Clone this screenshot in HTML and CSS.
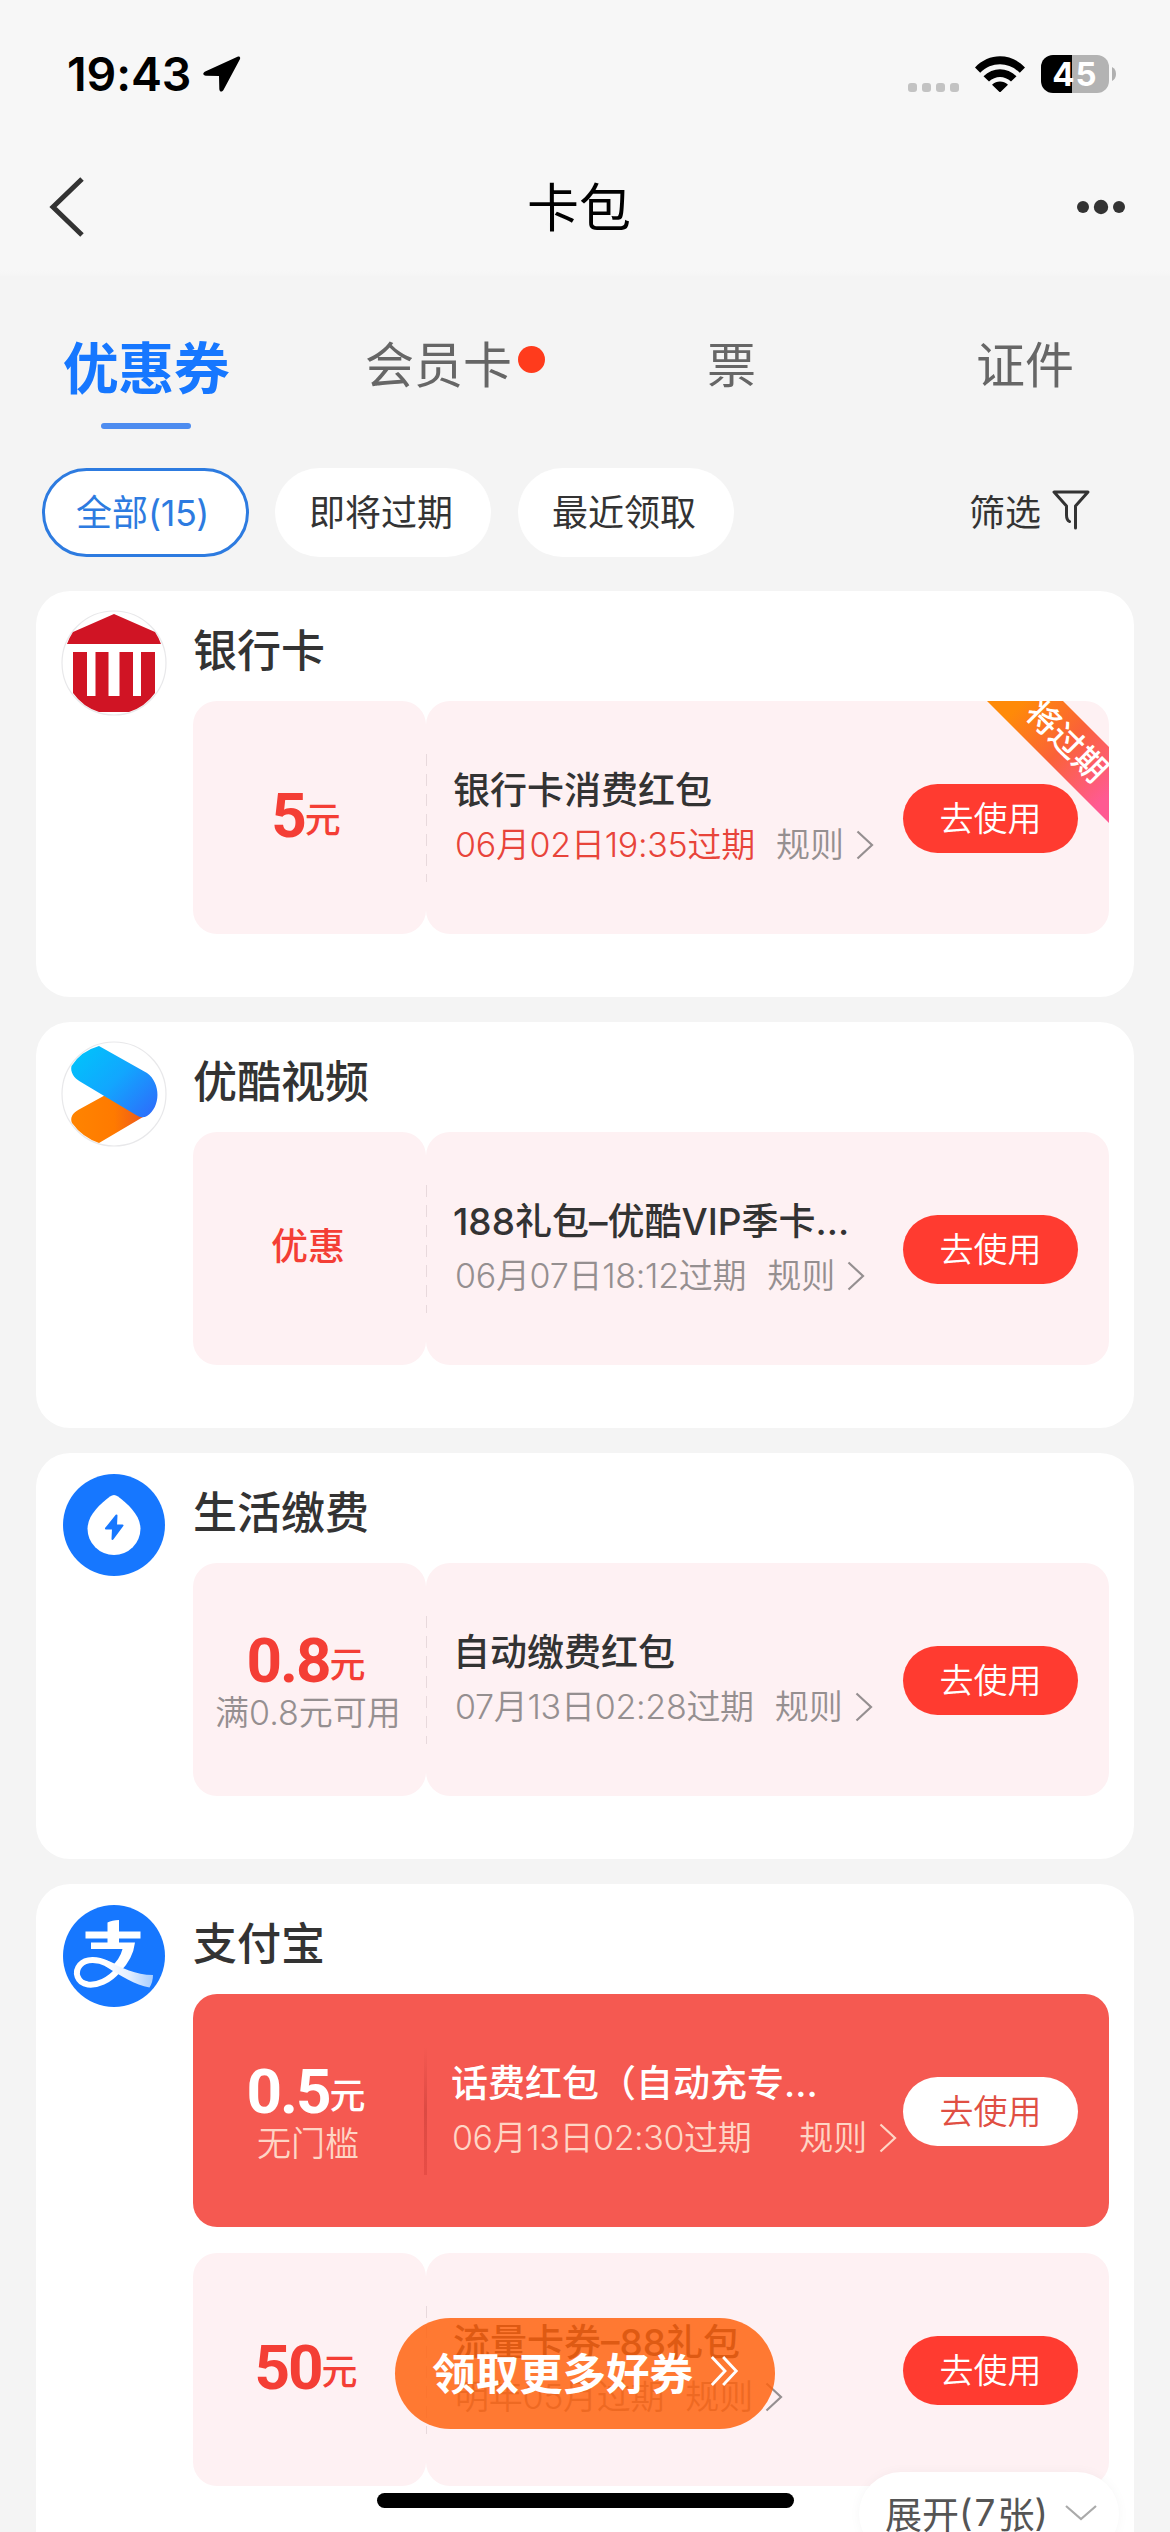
FILE: index.html
```html
<!DOCTYPE html>
<html lang="zh-CN">
<head>
<meta charset="utf-8">
<title>卡包</title>
<link rel="stylesheet" href="styles.css">
</head>
<body>
<svg width="0" height="0" class="defs">
  <defs>
    <symbol id="arrow" viewBox="0 0 18 30"><path d="M1.5 1.5 16 15 1.5 28.5" fill="none" stroke="currentColor" stroke-width="2.2"/></symbol>
    <linearGradient id="ykBlue" x1="0" y1="0.1" x2="1" y2="0.9"><stop offset="0" stop-color="#00c4fb"/><stop offset=".5" stop-color="#12a6fe"/><stop offset="1" stop-color="#2d6dfb"/></linearGradient>
    <linearGradient id="ykOrange" x1="0" y1="0" x2="1" y2="0"><stop offset="0" stop-color="#ff8400"/><stop offset=".6" stop-color="#ff7a00"/><stop offset="1" stop-color="#ee5a1c"/></linearGradient>
    <linearGradient id="zfTail" x1="0" y1="0" x2="1" y2="0"><stop offset="0" stop-color="#fff"/><stop offset=".5" stop-color="#e3efff"/><stop offset="1" stop-color="#a5ccff"/></linearGradient>
  </defs>
</svg>

<header class="top">
  <div class="status">
    <span class="time">19:43</span>
    <svg class="loc" width="38" height="36" viewBox="0 0 38 36"><path d="M34.5.8 2.2 15.4C-.7 17-.2 19.6 3 19.7L16 19.9 16.3 33c.1 3 3 3.5 4.3.8L36.9 3.3C37.800 1.200 36.400 0 34.500.8z"/></svg>
    <span class="signal"><i></i><i></i><i></i><i></i></span>
    <svg class="wifi" width="50" height="36" viewBox="0 0 50 36"><path d="M0 11.500C14-3.500 36-3.500 50 11.500L44.800 16.800C33.500 5.500 16.500 5.500 5.200 16.800zM8.500 20.200C18 11 32 11 41.500 20.200L36 25.600C29.500 19.500 20.500 19.500 14 25.600zM17 28.700C21.800 24.500 28.200 24.500 33 28.700L25 36.500z"/></svg>
    <span class="battery">45</span>
    <svg class="nub" width="4" height="14" viewBox="0 0 4 14"><path d="M0 0Q4 2 4 7T0 14z" fill="#b0b0b0"/></svg>
  </div>
  <nav class="nav">
    <svg width="36" height="60" viewBox="0 0 36 60"><path d="M33 2 4 30 33 58" fill="none" stroke="#333" stroke-width="5"/></svg>
    <h1>卡包</h1>
    <svg width="50" height="18" viewBox="0 0 50 18" fill="#333"><circle cx="7" cy="9" r="6"/><circle cx="25" cy="9" r="7.200"/><circle cx="43" cy="9" r="6"/></svg>
  </nav>
</header>

<div class="tabs">
  <span class="tab on">优惠券</span>
  <span class="tab t2">会员卡<i class="dot"></i></span>
  <span class="tab t3">票</span>
  <span class="tab t4">证件</span>
</div>

<div class="chips">
  <span class="chip c1">全部<span class="num">(15)</span></span>
  <span class="chip">即将过期</span>
  <span class="chip">最近领取</span>
  <span class="filter">筛选<svg width="38" height="42" viewBox="0 0 38 42" fill="none" stroke="#333" stroke-width="3" stroke-linejoin="round" stroke-linecap="round"><path d="M17.500 32.500Q14.500 31 14.500 26V17L2 3H36L23.500 17V39"/></svg></span>
</div>

<main class="list">
  <section class="card">
    <svg class="logo" width="106" height="106" viewBox="-1 -1 106 106"><circle cx="52" cy="52" r="52" fill="#fff" stroke="#e8e8ea" stroke-width="1.200"/><path d="M52 3 93 21Q97 27 99 33H5Q7 27 11 21zM11 41H25V85H33.500V41H46.500V85H57.500V41H71V85H79V41H93V82Q83 96 67 101H37Q21 96 11 82z" fill="#d01424"/></svg>
    <div class="body">
      <h2>银行卡</h2>
      <div class="coupon">
        <div class="left"><p class="amt"><b>5</b><span>元</span></p></div>
        <div class="right">
          <div class="info"><p class="name">银行卡消费红包</p><p class="meta"><span class="date soon">06月02日19:35过期</span><span class="rule">规则</span><svg class="ar"><use href="#arrow"/></svg></p></div>
          <span class="btn">去使用</span>
        </div>
        <div class="ribbon"><span>将过期</span></div>
      </div>
    </div>
  </section>

  <section class="card">
    <svg class="logo" width="106" height="106" viewBox="-1 -1 106 106"><circle cx="52" cy="52" r="52" fill="#fff" stroke="#e8e8ea" stroke-width="1.200"/><path d="M42.500 53.500 81 75 37 101Q20 95 10 81C8 76 10 71 17 67.500z" fill="url(#ykOrange)"/><path d="M37 4Q19 9 9.500 24C8 30 12 36 18 39.500L74 73Q80 77 85 74C99 65 99 41 85 31z" fill="url(#ykBlue)"/></svg>
    <div class="body">
      <h2>优酷视频</h2>
      <div class="coupon">
        <div class="left"><p class="word">优惠</p></div>
        <div class="right">
          <div class="info"><p class="name">188礼包–优酷VIP季卡...</p><p class="meta"><span class="date">06月07日18:12过期</span><span class="rule">规则</span><svg class="ar"><use href="#arrow"/></svg></p></div>
          <span class="btn">去使用</span>
        </div>
      </div>
    </div>
  </section>

  <section class="card">
    <svg class="logo" width="106" height="106" viewBox="-2 -2 106 106"><circle cx="51" cy="51" r="51" fill="#1677ff"/><path d="M47 22.500Q51 19.500 55 22.500C66 31 77 41 77.500 54.500A26.500 26.500 0 0 1 24.500 54.500C25 41 36 31 47 22.500z" fill="#fff"/><path d="M53.500 41.500 43 54.500H50L49.500 65 59.500 51.500H53z" fill="#1677ff" stroke="#1677ff" stroke-width="2" stroke-linejoin="round"/></svg>
    <div class="body">
      <h2>生活缴费</h2>
      <div class="coupon">
        <div class="left"><p class="amt"><b>0.8</b><span>元</span></p><p class="sub">满0.8元可用</p></div>
        <div class="right">
          <div class="info"><p class="name">自动缴费红包</p><p class="meta"><span class="date">07月13日02:28过期</span><span class="rule">规则</span><svg class="ar"><use href="#arrow"/></svg></p></div>
          <span class="btn">去使用</span>
        </div>
      </div>
    </div>
  </section>

  <section class="card last">
    <svg class="logo" width="106" height="106" viewBox="-2 -2 106 106"><circle cx="51" cy="51" r="51" fill="#1677ff"/><path d="M22.500 26.500H44.500V17.500Q49 15 56 15V26.500H77.500V33.500H56V37.500H72Q70 54 57 67L48 62Q57 54 59.500 44H28V37.500H44.500V33.500H22.500z" fill="#fff"/><path d="M55 65C46 76 34 80.500 25 79.500C14 78 11 67 17 60C23 53 35 54 44 58.500L58 65" fill="none" stroke="#fff" stroke-width="6"/><path d="M42 55C60 63 72 70 90 70Q90 77 86.500 82.500C72 80 58 71 42 61z" fill="url(#zfTail)"/></svg>
    <div class="body">
      <h2>支付宝</h2>
      <div class="coupon red">
        <div class="left"><p class="amt"><b>0.5</b><span>元</span></p><p class="sub">无门槛</p></div>
        <div class="right">
          <div class="info"><p class="name">话费红包（自动充专...</p><p class="meta"><span class="date">06月13日02:30过期</span><span class="rule far">规则</span><svg class="ar"><use href="#arrow"/></svg></p></div>
          <span class="btn">去使用</span>
        </div>
      </div>
      <div class="coupon">
        <div class="left"><p class="amt"><b>50</b><span>元</span></p></div>
        <div class="right">
          <div class="info"><p class="name">流量卡券–88礼包</p><p class="meta"><span class="date">明年05月过期</span><span class="rule">规则</span><svg class="ar"><use href="#arrow"/></svg></p></div>
          <span class="btn">去使用</span>
        </div>
      </div>
    </div>
    <div class="expand">展开<span class="num">(7</span>张<span class="num">)</span><svg width="32" height="18" viewBox="0 0 32 18"><path d="M1 2 16 15 31 2" fill="none" stroke="#aaa" stroke-width="2.200"/></svg></div>
  </section>
</main>

<div class="more">领取更多好券<svg width="30" height="32" viewBox="0 0 32 34" fill="none" stroke="#fff" stroke-width="3"><path d="M2 2 16 17 2 32M14 2 28 17 14 32"/></svg></div>
<div class="home"></div>
</body>
</html>
```
FILE: styles.css
```css
* { box-sizing: border-box; margin: 0; padding: 0; }
html, body { width: 1170px; height: 2532px; overflow: hidden; }
body {
  position: relative;
  background: #f4f4f4;
  color: #333;
  font-family: Inter, "Noto Sans CJK SC", sans-serif;
}
i { font-style: normal; }
svg { display: block; flex: none; }
.defs { position: absolute; }

.top { height: 276px; background: linear-gradient(#f7f7f7 270px, #f5f5f5); }
.status { height: 148px; padding: 0 54px 0 67px; display: flex; align-items: center; }
.time { width: 136px; font-size: 46.500px; font-weight: 600; letter-spacing: -0.1px; color: #000; white-space: nowrap; }
.signal { display: flex; gap: 5px; margin: 26px 16px 0 auto; }
.signal i { width: 9px; height: 9px; border-radius: 3px; background: #c3c3c3; }
.battery {
  width: 68px; height: 38px; margin: 0 3px 0 16px; border-radius: 12px;
  background: linear-gradient(90deg, #000 31px, #b3b3b3 31px);
  color: #fff; font-size: 33px; font-weight: 700; line-height: 38px; text-align: center; letter-spacing: 1px;
}
.nav { height: 118px; padding: 0 44px 0 49px; display: flex; align-items: center; justify-content: space-between; }
.nav h1 { font-size: 52px; font-weight: 400; line-height: 60px; color: #000; margin: 3px 0 0 -3px; }

.tabs { display: flex; height: 192px; padding: 53px 0 0 62px; }
.tab { font-size: 49px; line-height: 74px; color: #666; }
.tab.on {
  width: 168px; font-size: 56px; font-weight: 700; color: #1677ff; line-height: 80px; letter-spacing: -0.5px;
  display: flex; flex-direction: column; align-items: center; white-space: nowrap;
}
.tab.on::after { content: ""; width: 90px; height: 6px; margin-top: 14px; border-radius: 3px; background: #4d8cf0; }
.t2 { display: flex; margin-left: 135px; }
.dot { width: 27px; height: 27px; margin: 17px 0 0 6px; border-radius: 50%; background: #ff3b1c; }
.t3 { margin-left: 162px; }
.t4 { margin-left: 220px; }

.chips { display: flex; gap: 27px; height: 89px; padding-left: 42px; }
.chip {
  width: 216px; height: 89px; padding-right: 4px; border-radius: 45px; background: #fff;
  font-size: 36px; line-height: 91px; text-align: center;
}
.c1 { width: 207px; padding-right: 6px; border: 3px solid #2d7be0; color: #2d7be0; line-height: 84px; margin-right: -1px; }
.c1 .num { font-size: 36px; letter-spacing: -0.5px; }
.filter { display: flex; align-items: center; margin-left: 208px; font-size: 36px; height: 84px; }
.filter svg { margin-left: 11px; }

.list { display: flex; flex-direction: column; gap: 25px; padding: 34px 36px 0; }
.card { position: relative; display: flex; height: 406px; padding: 19px 25px 0; border-radius: 34px; background: #fff; }
.card.last { height: 720px; }
.body { width: 917px; margin-left: 26px; }
h2 { height: 91px; font-size: 44px; font-weight: 500; line-height: 82px; }
.coupon { position: relative; display: flex; height: 233px; margin-bottom: 26px; }
.left, .right { background: #fef1f3; border-radius: 24px; }
.left { width: 233px; padding-right: 3px; display: flex; flex-direction: column; align-items: center; justify-content: center; }
.right { position: relative; flex: 1; display: flex; align-items: center; justify-content: space-between; padding: 2px 31px 0 27px; }
.right::before {
  content: ""; position: absolute; left: 0; top: 53px; width: 1px; height: 128px;
  background: repeating-linear-gradient(#e8d9dc 0 12px, transparent 12px 20px);
}
.amt { display: flex; align-items: baseline; height: 60px; margin: 6px 4px 0 0; color: #f43e35; font-size: 36px; font-weight: 500; line-height: 60px; }
.amt:only-child { margin-top: -4px; }
.amt b { font-family: Roboto, sans-serif; font-size: 62px; font-weight: 700; letter-spacing: -2px; }
.amt span { transform: translateY(-4px); }
.word { margin-bottom: 9px; color: #f43e35; font-size: 37px; font-weight: 500; }
.sub { font-size: 34px; line-height: 44px; color: #958f90; font-weight: 350; white-space: nowrap; }
.info { white-space: nowrap; }
.name { font-size: 37px; font-weight: 500; line-height: 56px; height: 56px; }
.meta { display: flex; align-items: center; height: 56px; font-size: 34px; line-height: 54px; color: #958f90; font-weight: 350; padding-bottom: 3px; }
.date { margin-left: 2px; letter-spacing: -0.28px; }
.soon { color: #e8443a; }
.rule { margin-left: 21px; }
.rule.far { margin-left: 48px; }
.ar { width: 18px; height: 30px; margin-left: 12px; }
.btn {
  flex: none; width: 175px; height: 69px; border-radius: 35px; background: #ff3b30;
  color: #fff; font-size: 34px; font-weight: 350; line-height: 69px; text-align: center;
}
.red { border-radius: 24px; background: #f55951; }
.red .left, .red .right { background: none; }
.red .right { padding-left: 25px; }
.red .right::before { width: 3px; left: -2px; background: linear-gradient(rgba(200,50,45,0), #dc4a43 50%, rgba(200,50,45,0.3)); }
.red .amt, .red .name { color: #fff; }
.red .sub, .red .meta { color: #fed5c5; }
.red .date { margin-left: 1px; letter-spacing: -0.4px; }
.red .btn { background: #fff; color: #e04f43; }

.ribbon {
  position: absolute; top: 0; right: 0; width: 122px; height: 122px;
  clip-path: polygon(0 0, 76px 0, 122px 46px, 122px 122px);
  background: linear-gradient(135deg, #ff8a08 15%, #fa6238 50%, #ff5a92 88%);
}
.ribbon span {
  position: absolute; left: 30px; top: 20px; width: 100px; text-align: center;
  font-size: 33px; line-height: 40px; font-weight: 500; color: #fff; transform: rotate(45deg);
}
.expand {
  position: absolute; right: 15px; top: 588px; width: 260px; height: 84px; border-radius: 43px;
  padding: 0 0 3px 26px; display: flex; align-items: center; background: #fff;
  box-shadow: 0 0 12px rgba(0,0,0,.04); font-size: 37px; color: #555; white-space: nowrap;
}
.expand .num { letter-spacing: 2px; }
.expand svg { margin-left: 15px; }
.more {
  position: absolute; left: 395px; top: 2318px; width: 380px; height: 111px; border-radius: 56px;
  display: flex; align-items: center; padding: 0 0 5px 37px; background: rgba(255,98,13,.84);
  color: #fff; font-size: 43.500px; font-weight: 700; white-space: nowrap;
}
.more svg { margin-left: 17px; }
.home { position: absolute; left: 377px; top: 2493px; width: 417px; height: 15px; border-radius: 8px; background: #000; }
```
